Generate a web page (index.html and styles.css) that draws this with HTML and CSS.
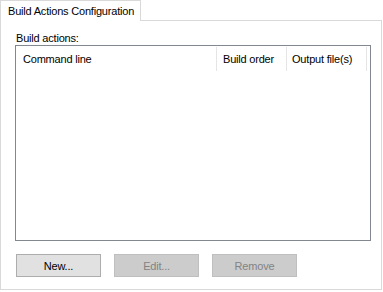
FILE: index.html
```html
<!DOCTYPE html>
<html lang="en">
<head>
    <meta charset="UTF-8">
    <title>Build Actions Configuration</title>
    <link rel="stylesheet" href="styles.css">
</head>
<body>
    <div class="tabs">
        <div class="tab active">Build Actions Configuration</div>
    </div>
    <div class="tab-page">
        <div class="group-label">Build actions:</div>
        <div class="list-view">
            <div class="list-header">
                <div class="col col-command">Command line</div>
                <div class="col col-order">Build order</div>
                <div class="col col-output">Output file(s)</div>
            </div>
            <!-- rows go here -->
        </div>
        <div class="buttons">
            <button class="btn">New...</button>
            <button class="btn" disabled>Edit...</button>
            <button class="btn" disabled>Remove</button>
        </div>
    </div>
</body>
</html>
```

FILE: styles.css
```css
/* General styling */
body {
    font-family: "Liberation Sans", Arial, sans-serif;
    font-size: 11px;
    letter-spacing: -0.2px;
    color: #000;
    background-color: #fff;
    margin: 0;
    padding: 0;
}

/* Tab strip */
.tabs {
    display: flex;
}

.tab {
    position: relative;
    z-index: 1;
    height: 21px;
    line-height: 20px;
    padding: 0 7px;
    width: 141px;
    box-sizing: border-box;
    border: 1px solid #d9d9d9;
    border-bottom: none;
    background-color: #fff;
    margin-bottom: -1px;
    white-space: nowrap;
}

.tab-page {
    width: 382px;
    height: 270px;
    box-sizing: border-box;
    border: 1px solid #d9d9d9;
    padding: 11px 11px 0 14px;
}

.group-label {
    height: 13px;
    line-height: 13px;
    margin-left: 1px;
}

/* List view */
.list-view {
    width: 356px;
    height: 196px;
    box-sizing: border-box;
    border: 1px solid #828790;
    background-color: #fff;
}

.list-header {
    display: flex;
}

.col {
    height: 24px;
    line-height: 24px;
    margin-top: 1px;
    box-sizing: border-box;
    border-right: 1px solid #e5e5e5;
    white-space: nowrap;
    overflow: hidden;
}

.col-command {
    width: 201px;
    padding-left: 7px;
}

.col-order {
    width: 70px;
    padding-left: 6px;
}

.col-output {
    width: 80px;
    padding-left: 5px;
}

/* Buttons */
.buttons {
    display: flex;
    gap: 13px;
    margin-top: 13px;
    margin-left: 1px;
}

.btn {
    width: 85px;
    height: 23px;
    padding: 0;
    font-family: inherit;
    font-size: 11px;
    letter-spacing: inherit;
    color: #000;
    background-color: #e1e1e1;
    border: 1px solid #adadad;
    border-radius: 0;
}

.btn:disabled {
    color: #838383;
    background-color: #cccccc;
    border-color: #bfbfbf;
}
```
